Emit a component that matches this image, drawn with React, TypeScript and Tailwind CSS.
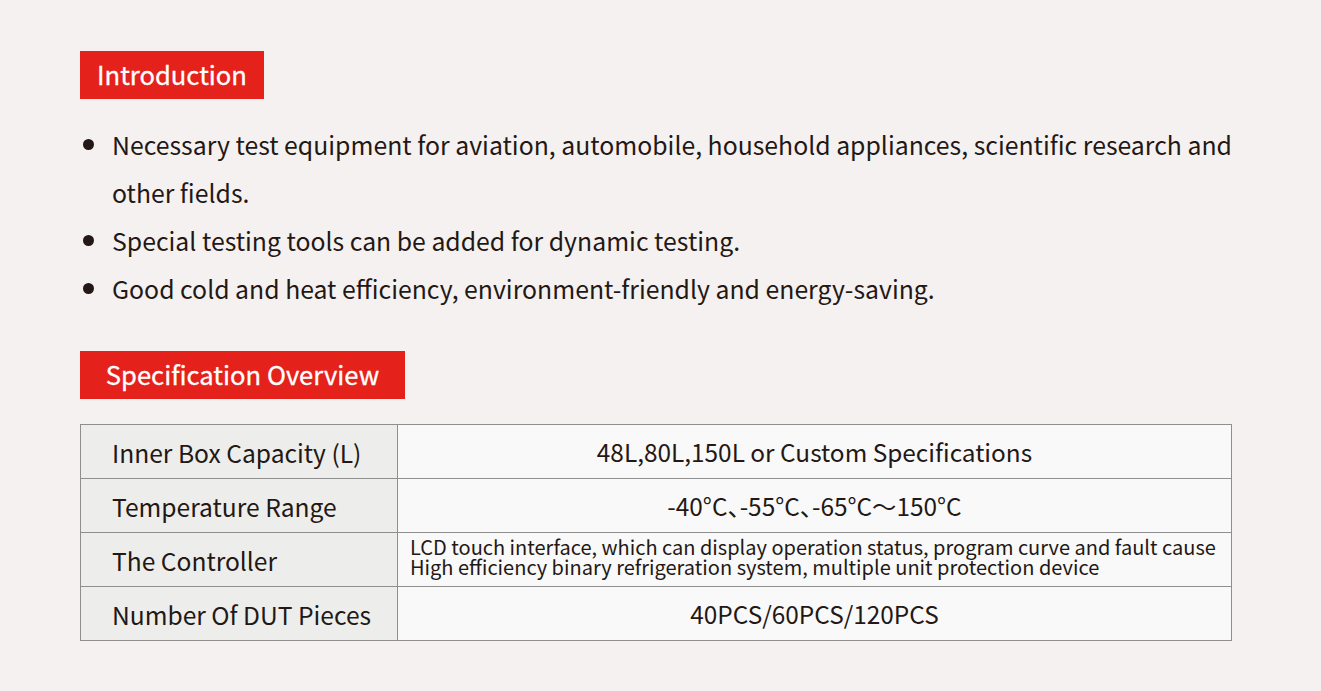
import React from 'react'

const bullets = [
  'Necessary test equipment for aviation, automobile, household appliances, scientific research and other fields.',
  'Special testing tools can be added for dynamic testing.',
  'Good cold and heat efficiency, environment-friendly and energy-saving.',
]

const specs: { label: string; value: React.ReactNode; small?: boolean }[] = [
  { label: 'Inner Box Capacity (L)', value: '48L,80L,150L or Custom Specifications' },
  { label: 'Temperature Range', value: '-40°C、-55°C、-65°C～150°C' },
  {
    label: 'The Controller',
    small: true,
    value: (
      <>
        LCD touch interface, which can display operation status, program curve and fault cause
        <br />
        High efficiency binary refrigeration system, multiple unit protection device
      </>
    ),
  },
  { label: 'Number Of DUT Pieces', value: '40PCS/60PCS/120PCS' },
]

function Badge({ children, width }: { children: React.ReactNode; width: string }) {
  return (
    <div className={`${width} h-[48px] bg-[#e5211b] text-white text-[25.6px] leading-[46px] text-center [-webkit-text-stroke:0.3px_white]`}>
      {children}
    </div>
  )
}

export default function App() {
  return (
    <div
      className="min-h-[691px] bg-[#f5f1f0] text-[#231815] px-[80px] pt-[51px] pb-[50px]"
      style={{ fontFamily: '"Noto Sans CJK SC", "Noto Sans", sans-serif' }}
    >
      <div className="w-[1152px]">
        <Badge width="w-[184px]">Introduction</Badge>

        <ul className="mt-[21px] text-[24.8px] leading-[48px]">
          {bullets.map((b) => (
            <li key={b} className="flex">
              <span className="w-[32px] shrink-0 flex justify-start items-start pt-[19px] pl-[3px]">
                <span className="block w-[11px] h-[11px] rounded-full bg-[#231815]" />
              </span>
              <span>{b}</span>
            </li>
          ))}
        </ul>

        <div className="mt-[39px]">
          <Badge width="w-[325px]">Specification Overview</Badge>
        </div>

        <table className="mt-[25px] w-full border-collapse border border-[#8f8f8f]">
          <tbody>
            {specs.map((s) => (
              <tr key={s.label} className="h-[54px]">
                <td className="w-[317px] bg-[#ededeb] border border-[#8f8f8f] pl-[31px] text-[24.6px] leading-[30px] align-middle">
                  {s.label}
                </td>
                {s.small ? (
                  <td className="bg-[#f9f9f9] border border-[#8f8f8f] px-[12px] pb-[6px] text-[20px] leading-[20px] text-left align-middle">
                    {s.value}
                  </td>
                ) : (
                  <td className="bg-[#f9f9f9] border border-[#8f8f8f] text-[24.4px] leading-[30px] text-center align-middle [font-feature-settings:'halt']">
                    {s.value}
                  </td>
                )}
              </tr>
            ))}
          </tbody>
        </table>
      </div>
    </div>
  )
}
